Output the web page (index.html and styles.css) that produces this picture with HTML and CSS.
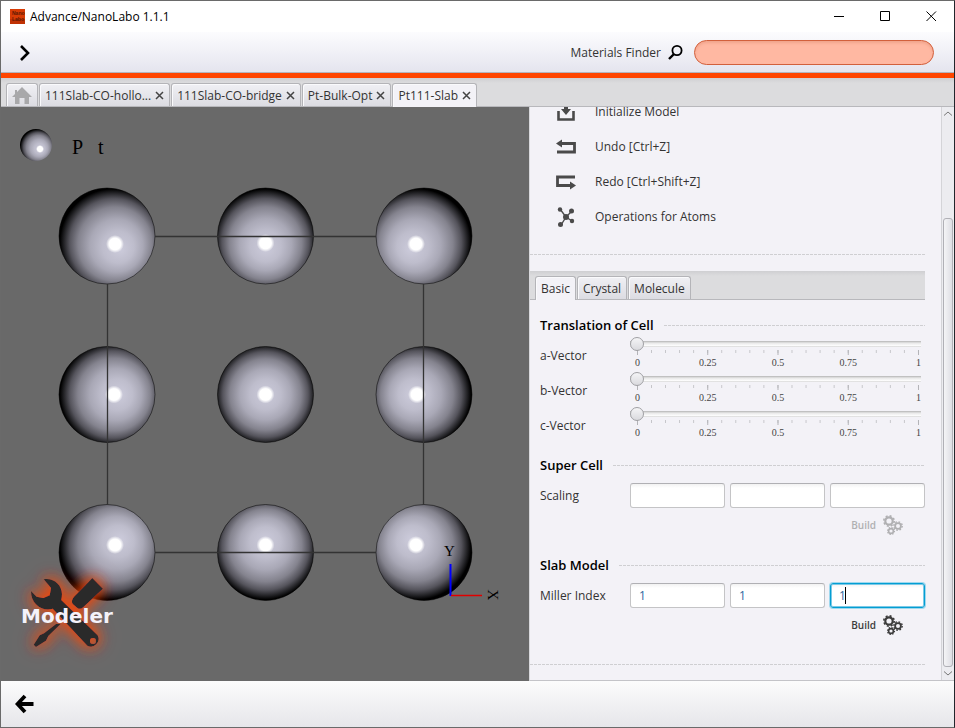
FILE: index.html
```html
<!DOCTYPE html>
<html lang="en">
<head>
  <meta charset="UTF-8">
  <meta name="viewport" content="width=device-width, initial-scale=1.0">
  <title>Advance/NanoLabo 1.1.1</title>
  <link rel="stylesheet" href="styles.css">
</head>
<body>
  <div class="window">
    <header class="titlebar">
      <svg class="logo" viewBox="0 0 15 15" width="15" height="15">
        <rect width="15" height="15" fill="#d83c06"/>
        <rect y="10" width="15" height="5" fill="#c03204"/>
        <text x="2" y="6">Nano</text>
        <text x="2" y="12">Labo</text>
      </svg>
      <span class="title">Advance/NanoLabo 1.1.1</span>
      <div class="window-buttons">
        <button aria-label="Minimize"><svg width="11" height="11"><path d="M0 5.5H10"/></svg></button>
        <button aria-label="Maximize"><svg width="11" height="11"><path d="M.5 .5H9.5V9.5H.5Z"/></svg></button>
        <button aria-label="Close"><svg width="11" height="11"><path d="M.5 .5L10 10M10 .5L.5 10"/></svg></button>
      </div>
    </header>

    <div class="toolbar">
      <button class="icon-button" aria-label="Open menu">
        <svg width="12" height="18" viewBox="0 0 12 18"><path d="M2 2L9 9L2 16" fill="none" stroke="#000" stroke-width="2.6"/></svg>
      </button>
      <div class="finder">
        <label for="finder">Materials Finder</label>
        <svg width="15" height="15" viewBox="0 0 15 15"><circle cx="9" cy="5.5" r="4.600" fill="none" stroke="#000" stroke-width="1.8"/><path d="M6 9L1 14" stroke="#000" stroke-width="2.4"/></svg>
        <input type="text" id="finder">
      </div>
    </div>

    <nav class="tabs main-tabs">
      <button class="tab home" aria-label="Home">
        <svg width="20" height="19" viewBox="0 0 20 19"><path d="M10 1L20 11H17V18H12.500V12H7.500V18H3V11H0L3 8V4H5V6Z" fill="#a8a8aa"/></svg>
      </button>
      <button class="tab">111Slab-CO-hollo...<svg class="x" width="9" height="9"><path d="M1 1L8 8M8 1L1 8"/></svg></button>
      <button class="tab">111Slab-CO-bridge<svg class="x" width="9" height="9"><path d="M1 1L8 8M8 1L1 8"/></svg></button>
      <button class="tab">Pt-Bulk-Opt<svg class="x" width="9" height="9"><path d="M1 1L8 8M8 1L1 8"/></svg></button>
      <button class="tab active">Pt111-Slab<svg class="x" width="9" height="9"><path d="M1 1L8 8M8 1L1 8"/></svg></button>
    </nav>

    <main class="main">
      <div class="viewer">
        <svg class="scene" viewBox="0 0 528 574">
          <defs>
            <linearGradient id="shade">
              <stop offset="0" stop-color="#cccbdb"/>
              <stop offset=".3" stop-color="#bebdcc"/>
              <stop offset=".5" stop-color="#a9a8b6"/>
              <stop offset=".7" stop-color="#84838e"/>
              <stop offset=".84" stop-color="#55545c"/>
              <stop offset=".94" stop-color="#202023"/>
              <stop offset="1" stop-color="#000"/>
            </linearGradient>
            <radialGradient id="s-tl" href="#shade" cx=".56" cy=".56" r=".55" fx=".64" fy=".64"/>
            <radialGradient id="s-t" href="#shade" cx=".5" cy=".55" r=".54" fx=".5" fy=".63"/>
            <radialGradient id="s-tr" href="#shade" cx=".44" cy=".56" r=".55" fx=".36" fy=".64"/>
            <radialGradient id="s-l" href="#shade" cx=".55" cy=".5" r=".54" fx=".63" fy=".5"/>
            <radialGradient id="s-c" href="#shade" cx=".5" cy=".5" r=".53"/>
            <radialGradient id="s-r" href="#shade" cx=".45" cy=".5" r=".54" fx=".37" fy=".5"/>
            <radialGradient id="s-bl" href="#shade" cx=".56" cy=".44" r=".55" fx=".64" fy=".36"/>
            <radialGradient id="s-b" href="#shade" cx=".5" cy=".45" r=".54" fx=".5" fy=".37"/>
            <radialGradient id="s-br" href="#shade" cx=".44" cy=".44" r=".55" fx=".36" fy=".36"/>
            <radialGradient id="shine">
              <stop offset=".65" stop-color="#fff"/>
              <stop offset="1" stop-color="#fff" stop-opacity="0"/>
            </radialGradient>
            <filter id="glow" x="-40%" y="-40%" width="180%" height="180%">
              <feDropShadow dx="0" dy="0" stdDeviation="20" flood-color="#ff4500"/>
              <feDropShadow dx="0" dy="0" stdDeviation="22" flood-color="#ff4500" flood-opacity=".5"/>
            </filter>
          </defs>

          <circle cx="35" cy="38" r="16" fill="url(#s-tl)"/>
          <circle cx="39" cy="42" r="4" fill="url(#shine)"/>
          <text class="legend" x="71" y="47">P <tspan x="97">t</tspan></text>

          <g class="atoms">
            <circle cx="106" cy="129" r="48" fill="url(#s-tl)"/>
            <circle cx="264.500" cy="129" r="48" fill="url(#s-t)"/>
            <circle cx="423" cy="129" r="48" fill="url(#s-tr)"/>
            <circle cx="106" cy="287.500" r="48" fill="url(#s-l)"/>
            <circle cx="264.500" cy="287.500" r="48" fill="url(#s-c)"/>
            <circle cx="423" cy="287.500" r="48" fill="url(#s-r)"/>
            <circle cx="106" cy="445.500" r="48" fill="url(#s-bl)"/>
            <circle cx="264.500" cy="445.500" r="48" fill="url(#s-b)"/>
            <circle cx="423" cy="445.500" r="48" fill="url(#s-br)"/>
          </g>
          <g fill="url(#shine)">
            <circle cx="114" cy="137" r="9"/>
            <circle cx="264.500" cy="136" r="9"/>
            <circle cx="415" cy="137" r="9"/>
            <circle cx="113" cy="287.500" r="9"/>
            <circle cx="264.500" cy="287.500" r="9"/>
            <circle cx="416" cy="287.500" r="9"/>
            <circle cx="114" cy="438" r="9"/>
            <circle cx="264.500" cy="438" r="9"/>
            <circle cx="415" cy="438" r="9"/>
          </g>
          <path class="cell" d="M154 129.500H375M154 445.500H375M106.500 177V398M422.500 177V398"/>

          <path d="M449.500 457V489" stroke="#00f" stroke-width="2"/>
          <path d="M450 488.500H481" stroke="#e00000" stroke-width="1.500"/>
          <text class="axis" x="448.500" y="449">Y</text>
          <text class="axis" transform="translate(487 488) rotate(90)">X</text>

          <g transform="translate(-1 383) scale(.3333)" fill="#2b2b2b" filter="url(#glow)">
            <path d="M131 268C160 262 186 284 186 312Q186 322 184 330L293 436A23 23 0 0 1 262 467L158 356C130 366 92 345 93 303L110 320L130 324L149 316L153 294ZM279 444A9 9 0 1 0 279 462A9 9 0 1 0 279 444Z" fill-rule="evenodd"/>
            <path d="M277 264L309 296L250 352Q240 360 232 354L218 342Q212 332 222 320Z"/>
            <path d="M168 402L182 402L145 438L138 452L108 471L101 464L119 436L132 430Z"/>
          </g>
          <text class="badge" x="20" y="516">Modeler</text>
        </svg>
      </div>

      <aside class="side">
        <div class="panel">
          <ul class="actions">
            <li><button>
              <svg width="20" height="20" viewBox="0 0 20 20"><path d="M2.500 9V17.500H17.500V9" fill="none" stroke="#4a4a4a" stroke-width="2.600"/><path d="M10 13L5 7H8V1H12V7H15Z" fill="#4a4a4a"/></svg>
              Initialize Model</button></li>
            <li><button>
              <svg width="20" height="20" viewBox="0 0 20 20"><path d="M5 6.500H18.500V15H1" fill="none" stroke="#4a4a4a" stroke-width="2.800"/><path d="M0 6.500L6 2.500V10.500Z" fill="#4a4a4a"/></svg>
              Undo [Ctrl+Z]</button></li>
            <li><button>
              <svg width="20" height="20" viewBox="0 0 20 20"><path d="M19 5H1.500V13.500H15" fill="none" stroke="#4a4a4a" stroke-width="2.800"/><path d="M20 13.500L14 9.500V17.500Z" fill="#4a4a4a"/></svg>
              Redo [Ctrl+Shift+Z]</button></li>
            <li><button>
              <svg width="20" height="20" viewBox="0 0 20 20" fill="#4a4a4a"><path d="M4 2L10 10L5 18M10 10L16 4M10 10L16 14" fill="none" stroke="#4a4a4a" stroke-width="1.400"/><circle cx="10" cy="10" r="3"/><circle cx="4" cy="2.500" r="2.200"/><circle cx="15.500" cy="4" r="2.500"/><circle cx="16" cy="14" r="2.200"/><circle cx="4.500" cy="17.500" r="2.500"/></svg>
              Operations for Atoms</button></li>
          </ul>
          <div class="dashes"></div>

          <nav class="tabs sub-tabs">
            <button class="tab active">Basic</button>
            <button class="tab">Crystal</button>
            <button class="tab">Molecule</button>
          </nav>

          <div class="sections">
            <section>
              <h2>Translation of Cell</h2>
              <div class="row">
                <label for="a-vector">a-Vector</label>
                <div class="slider">
                  <input type="range" id="a-vector" min="0" max="1" step="0.05" value="0">
                  <div class="ticks"></div>
                  <div class="scale"><span>0</span><span>0.25</span><span>0.5</span><span>0.75</span><span>1</span></div>
                </div>
              </div>
              <div class="row">
                <label for="b-vector">b-Vector</label>
                <div class="slider">
                  <input type="range" id="b-vector" min="0" max="1" step="0.05" value="0">
                  <div class="ticks"></div>
                  <div class="scale"><span>0</span><span>0.25</span><span>0.5</span><span>0.75</span><span>1</span></div>
                </div>
              </div>
              <div class="row">
                <label for="c-vector">c-Vector</label>
                <div class="slider">
                  <input type="range" id="c-vector" min="0" max="1" step="0.05" value="0">
                  <div class="ticks"></div>
                  <div class="scale"><span>0</span><span>0.25</span><span>0.5</span><span>0.75</span><span>1</span></div>
                </div>
              </div>
            </section>

            <section>
              <h2>Super Cell</h2>
              <div class="row">
                <label for="scale-a">Scaling</label>
                <div class="fields">
                  <input type="text" id="scale-a">
                  <input type="text" aria-label="Scaling b">
                  <input type="text" aria-label="Scaling c">
                </div>
              </div>
              <div class="build-row">
                <button class="build" disabled>Build
                  <svg width="20" height="20" viewBox="0 0 20 20"><use href="#gears"/></svg>
                </button>
              </div>
            </section>

            <section>
              <h2>Slab Model</h2>
              <div class="row">
                <label for="miller-h">Miller Index</label>
                <div class="fields">
                  <input type="text" id="miller-h" value="1">
                  <input type="text" aria-label="Miller index k" value="1">
                  <div class="focused">
                    <input type="text" aria-label="Miller index l" value="1">
                    <span class="caret"></span>
                  </div>
                </div>
              </div>
              <div class="build-row">
                <button class="build">Build
                  <svg width="20" height="20" viewBox="0 0 20 20">
                    <g id="gears" fill="none" stroke="currentColor">
                      <circle cx="6" cy="6" r="3.700" stroke-width="2.200"/>
                      <circle cx="6" cy="6" r="5.200" stroke-width="1.600" stroke-dasharray="2 2.084"/>
                      <circle cx="15" cy="11" r="2.900" stroke-width="1.800"/>
                      <circle cx="15" cy="11" r="4.200" stroke-width="1.400" stroke-dasharray="1.650 1.650"/>
                      <circle cx="8" cy="16" r="2.400" stroke-width="1.600"/>
                      <circle cx="8" cy="16" r="3.500" stroke-width="1.200" stroke-dasharray="1.375 1.375"/>
                    </g>
                  </svg>
                </button>
              </div>
            </section>
          </div>
          <div class="dashes"></div>
        </div>

        <div class="scrollbar">
          <svg width="8" height="5"><path d="M0 4.500L4 1L8 4.500"/></svg>
          <div class="track"><div class="thumb"></div></div>
          <svg width="8" height="5"><path d="M0 .5L4 4L8 .5"/></svg>
        </div>
      </aside>
    </main>

    <footer class="bottombar">
      <button class="icon-button" aria-label="Back">
        <svg width="20" height="20" viewBox="0 0 20 20"><path d="M18.500 10H2.500M10 2L2.500 10L10 18" fill="none" stroke="#000" stroke-width="3.800"/></svg>
      </button>
    </footer>
  </div>
</body>
</html>
```
FILE: styles.css
```css
* {
  box-sizing: border-box;
}
body {
  margin: 0;
  font-family: "Open Sans", "Noto Sans", sans-serif;
  font-size: 12px;
  color: #333;
}
button {
  padding: 0;
  border: none;
  background: none;
  font: inherit;
  color: inherit;
}
svg {
  display: block;
  flex-shrink: 0;
}
.window {
  height: 100vh;
  display: flex;
  flex-direction: column;
  border: 1px solid #6a6a6a;
  border-right-color: #22262c;
}

/* title bar */
.titlebar {
  height: 31px;
  display: flex;
  align-items: center;
  padding-left: 9px;
  background: #fff;
  color: #000;
}
.logo text {
  font: bold 5px "Liberation Sans", sans-serif;
  fill: #5c1804;
}
.title {
  margin-left: 5px;
}
.window-buttons {
  display: flex;
  margin-left: auto;
}
.window-buttons button {
  width: 46px;
  height: 30px;
  display: flex;
  align-items: center;
  justify-content: center;
}
.window-buttons path {
  fill: none;
  stroke: #000;
}

/* toolbars */
.toolbar {
  height: 46px;
  display: flex;
  align-items: center;
  justify-content: space-between;
  padding: 0 20px 0 18px;
  background: linear-gradient(#fcfcfe, #e4e4ee);
  border-bottom: 5px solid #ff4500;
  box-shadow: inset 0 -1px #b4b4bc;
}
.finder {
  display: flex;
  align-items: center;
}
.finder svg {
  margin: 0 11px 0 7px;
}
.finder input {
  width: 240px;
  height: 25px;
  padding: 0 12px;
  border: 1px solid #d2603c;
  border-radius: 13px;
  background: #ffb8a2;
  box-shadow: inset 0 2px 3px #f0a48c;
}
.bottombar {
  height: 46px;
  display: flex;
  align-items: center;
  padding-left: 14px;
  background: linear-gradient(#fcfcfc, #e6e6ea);
}

/* tabs */
.tabs {
  flex-shrink: 0;
  display: flex;
  align-items: flex-end;
  gap: 1px;
  height: 29px;
  padding-left: 5px;
  background: linear-gradient(#cfcfd2, #dcdcde 5px);
  border-bottom: 1px solid #b8b8bc;
}
.tab {
  height: 23px;
  display: flex;
  align-items: center;
  gap: 4px;
  padding: 0 5px;
  border: 1px solid #b4b4b8;
  border-bottom: none;
  border-radius: 3px 3px 0 0;
  background: linear-gradient(#f0f0f4, #dcdce2);
  box-shadow: inset 1px 1px #fafafc;
}
.tab.active {
  height: 24px;
  margin-bottom: -1px;
  background: #f3f2f7;
}
.x path {
  stroke: #444;
  stroke-width: 1.5;
}

/* main area */
.main {
  flex: 1;
  min-height: 0;
  display: flex;
}
.viewer {
  flex: 1;
  min-width: 0;
  background: #696969;
}
.scene {
  width: 100%;
  height: 100%;
}
.legend {
  font: 20px "Liberation Serif", serif;
}
.atoms circle {
  stroke: #000;
  stroke-opacity: 0.5;
}
.cell {
  fill: none;
  stroke: #333;
  stroke-width: 1.3;
}
.axis {
  font: 15px "Liberation Serif", serif;
  text-anchor: middle;
}
.badge {
  font: bold 20px "DejaVu Sans", sans-serif;
  fill: #f4f2fa;
}

/* side panel */
.side {
  width: 45%;
  max-width: 425px;
  display: flex;
  background: #f3f2f7;
  border-left: 1px solid #d8d8dc;
  border-bottom: 1px solid #c4c4c8;
}
.panel {
  flex: 1;
  min-width: 0;
  display: flex;
  flex-direction: column;
  justify-content: flex-end;
  overflow: hidden;
  padding: 0 16px 15px 0;
}
.actions {
  flex-shrink: 0;
  margin: 0 0 20px;
  padding: 0 0 0 26px;
  list-style: none;
}
.actions button {
  height: 35px;
  display: flex;
  align-items: center;
  gap: 19px;
}
.dashes {
  flex-shrink: 0;
  height: 1px;
  background: repeating-linear-gradient(90deg, #cfcfd2 0 3px, #f3f2f7 3px 4px);
}
.sub-tabs {
  height: 29px;
  margin-top: 16px;
}
.sections {
  flex-shrink: 0;
  padding: 3px 0 21px 10px;
}
section {
  margin-top: 9px;
}
h2 {
  display: flex;
  align-items: center;
  gap: 10px;
  height: 26px;
  margin: 0;
  font-size: 13px;
  font-weight: 600;
  color: #000;
}
h2::after {
  content: "";
  flex: 1;
  height: 1px;
  background: repeating-linear-gradient(90deg, #cfcfd2 0 3px, #f3f2f7 3px 4px);
}
.row {
  height: 35px;
  display: grid;
  grid-template-columns: 90px 1fr;
  align-items: center;
}
.slider {
  align-self: start;
  padding-right: 4px;
}
.slider input {
  display: block;
  width: 100%;
  height: 12px;
  margin: 0;
  appearance: none;
  background: linear-gradient(#b4b4b4, #e8e8e8 2px, #fff 5px, #c4c4c4) center / 100% 6px no-repeat;
}
.slider input::-webkit-slider-thumb {
  appearance: none;
  width: 14px;
  height: 14px;
  border: 1px solid #a0a0a4;
  border-radius: 50%;
  background: linear-gradient(#f4f4f6, #dadade);
}
/* 20 steps, a longer mark on every fifth */
.ticks {
  height: 5px;
  margin: 0 2px 0 7px;
  background:
    linear-gradient(90deg, #b4b4b8 1px, transparent 1px) 0 0 / calc((100% - 1px) / 4) 5px repeat-x,
    linear-gradient(90deg, #c4c4c8 1px, transparent 1px) 0 0 / calc((100% - 1px) / 20) 3px repeat-x;
}
.scale {
  display: flex;
  justify-content: space-between;
  margin: 2px 2px 0 7px;
  font: 10px/12px "Liberation Serif", serif;
  color: #444;
}
.scale span {
  width: 1px;
  display: flex;
  justify-content: center;
}
.fields {
  display: grid;
  grid-template-columns: repeat(3, 1fr);
  gap: 5px;
}
.fields input {
  width: 100%;
  height: 25px;
  padding: 0 8px;
  border: 1px solid #c4c4c6;
  border-top-color: #b0b0b4;
  border-radius: 3px;
  background: linear-gradient(#f2f2f2, #fff 4px);
  font: inherit;
  color: #2f68a0;
  outline: none;
}
.focused {
  position: relative;
}
.fields .focused input {
  display: block;
  border-color: #039ed3;
  box-shadow: 0 0 0 1px #9fd8ee, inset 0 0 0 1px #7cc9e6;
}
.caret {
  position: absolute;
  left: 15px;
  top: 4px;
  width: 1px;
  height: 17px;
  background: #000;
}
.build-row {
  display: flex;
  justify-content: flex-end;
  padding: 0 22px 6px 0;
}
.build {
  height: 24px;
  display: flex;
  align-items: center;
  gap: 7px;
  font-size: 10px;
  font-weight: 600;
  color: #3c3c3c;
}
.build:disabled {
  color: #b0b0b2;
}

/* scroll bar */
.scrollbar {
  width: 13px;
  display: flex;
  flex-direction: column;
  align-items: center;
  gap: 4px;
  padding: 4px 0;
  background: #ececf0;
  border-left: 1px solid #d4d4d8;
}
.scrollbar path {
  fill: none;
  stroke: #777;
}
.track {
  flex: 1;
  width: 10px;
  display: flex;
  align-items: flex-end;
}
.thumb {
  width: 100%;
  height: 82%;
  border: 1px solid #b0b0b6;
  border-radius: 3px;
  background: linear-gradient(90deg, #f4f4f6, #dedee4);
}
```
